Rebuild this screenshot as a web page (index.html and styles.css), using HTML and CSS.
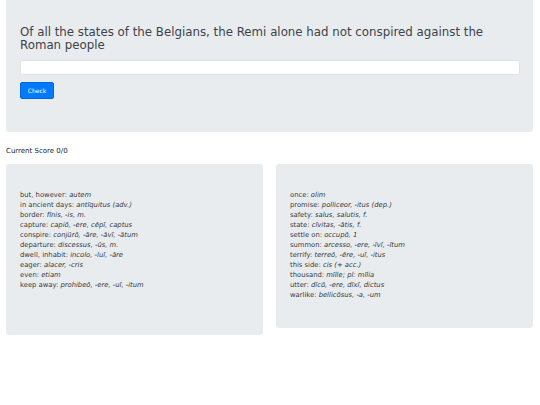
FILE: index.html
```html
<!DOCTYPE html>
<html lang="en">
<head>
    <meta charset="UTF-8">
    <meta name="viewport" content="width=device-width, initial-scale=1.0">
    <title>Latin Vocab</title>
    <link rel="stylesheet" href="styles.css">
</head>
<body>
    <div class="jumbotron">
        <h2 class="prompt">Of all the states of the Belgians, the Remi alone had not conspired against the Roman people</h2>
        <input type="text" class="answer">
        <button class="check-btn">Check</button>
    </div>

    <p class="score">Current Score 0/0</p>

    <div class="vocab-row">
        <div class="vocab-card tall">
            <ul class="vocab-list">
                <li>but, however: <i>autem</i></li>
                <li>in ancient days: <i>antīquitus (adv.)</i></li>
                <li>border: <i>fīnis, -is, m.</i></li>
                <li>capture: <i>capiō, -ere, cēpī, captus</i></li>
                <li>conspire: <i>conjūrō, -āre, -āvī, -ātum</i></li>
                <li>departure: <i>discessus, -ūs, m.</i></li>
                <li>dwell, inhabit: <i>incolo, -luī, -āre</i></li>
                <li>eager: <i>alacer, -cris</i></li>
                <li>even: <i>etiam</i></li>
                <li>keep away: <i>prohibeō, -ere, -uī, -itum</i></li>
            </ul>
        </div>
        <div class="vocab-card">
            <ul class="vocab-list">
                <li>once: <i>olim</i></li>
                <li>promise: <i>polliceor, -itus (dep.)</i></li>
                <li>safety: <i>salus, salutis, f.</i></li>
                <li>state: <i>cīvitas, -ātis, f.</i></li>
                <li>settle on: <i>occupō, 1</i></li>
                <li>summon: <i>arcesso, -ere, -īvī, -ītum</i></li>
                <li>terrify: <i>terreō, -ēre, -uī, -itus</i></li>
                <li>this side: <i>cis (+ acc.)</i></li>
                <li>thousand: <i>mīlle; pl: mīlia</i></li>
                <li>utter: <i>dīcō, -ere, dīxī, dictus</i></li>
                <li>warlike: <i>bellicōsus, -a, -um</i></li>
            </ul>
        </div>
    </div>
</body>
</html>
```

FILE: styles.css
```css
body {
    margin: 0;
    padding: 0 7px 0 6px;
    font-family: "DejaVu Sans", sans-serif;
    color: #212529;
    background: #fff;
}

.jumbotron {
    background: #e9ecef;
    border-radius: 0 0 3px 3px;
    padding: 26px 13px 33px 14px;
    display: flex;
    flex-direction: column;
    align-items: flex-start;
}

.prompt {
    margin: 0 0 8px;
    font-size: 11.8px;
    font-weight: normal;
    line-height: 13px;
    color: #3d4349;
}

.answer {
    box-sizing: border-box;
    width: 100%;
    height: 15px;
    margin: 0 0 7px;
    padding: 0 4px;
    border: 1px solid #dfe3e7;
    border-radius: 2px;
    background: #fff;
}

.check-btn {
    box-sizing: border-box;
    width: 34px;
    height: 17px;
    padding: 0;
    border: 1px solid #0069d9;
    border-radius: 2px;
    background: #007bff;
    color: #fff;
    font-family: "DejaVu Sans", sans-serif;
    font-size: 6px;
    cursor: pointer;
}

.score {
    margin: 14px 0 8px;
    font-size: 7px;
    line-height: 10px;
}

.vocab-row {
    display: flex;
    align-items: flex-start;
    gap: 13px;
}

.vocab-card {
    flex: 1;
    box-sizing: border-box;
    height: 164px;
    padding: 26px 14px;
    background: #e9ecef;
    border-radius: 3px;
}

.vocab-card.tall {
    height: 171px;
}

.vocab-list {
    list-style: none;
    margin: 0;
    padding: 0;
    font-size: 6.8px;
    line-height: 10px;
    color: #343a40;
}
```
